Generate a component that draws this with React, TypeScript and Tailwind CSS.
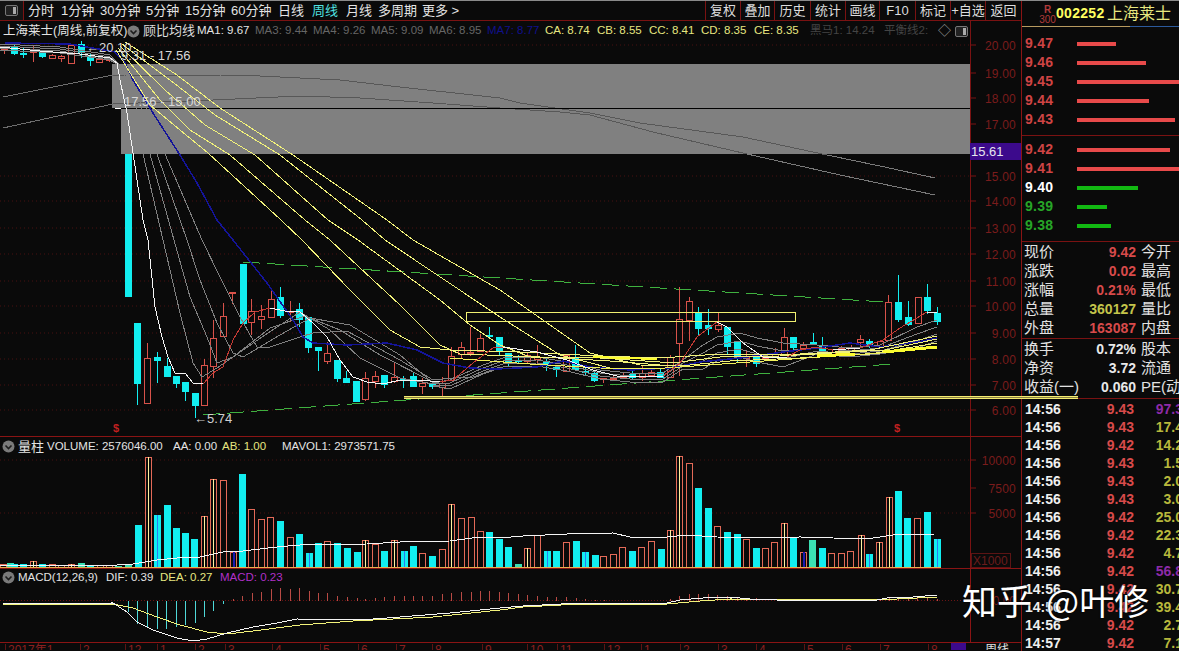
import React from "react";

type C = [number, number, number, number, number, "r" | "c"];
const candles: C[] = [
  [4,48,49,50,54,"r"],[14,45,47,53,55,"c"],[23,48,53,54,58,"c"],[33,45,51,52,62,"r"],[42,50,52,56,58,"c"],[52,54,55,58,58,"r"],[61,55,56,58,62,"r"],[71,44,45,63,64,"r"],[81,41,44,52,58,"c"],[90,54,55,60,66,"c"],[99,58,59,62,63,"r"],[109,56,58,60,62,"r"],
  [128,154,154,296,296,"c"],[137,323,323,383,405,"c"],[147,343,358,403,403,"r"],[157,352,357,360,383,"c"],[167,358,366,376,377,"c"],[176,376,376,383,388,"c"],[185,382,382,391,401,"c"],[195,393,393,405,418,"c"],[204,359,365,405,405,"r"],[213,320,338,366,378,"r"],[223,303,316,336,336,"r"],[232,292,292,293,304,"r"],[243,264,264,323,323,"c"],[251,299,311,322,335,"r"],[261,305,316,319,329,"r"],[271,288,299,317,317,"r"],[280,287,297,315,318,"c"],[290,301,311,312,322,"r"],[299,303,309,319,327,"c"],[308,317,317,347,353,"c"],[318,347,347,350,371,"c"],[327,342,353,361,364,"r"],[337,360,360,378,382,"c"],[346,371,378,382,382,"c"],[356,381,381,401,401,"c"],[365,372,378,399,401,"r"],[375,371,376,381,388,"r"],[384,375,375,384,388,"c"],[394,362,377,381,383,"r"],[403,376,379,380,388,"c"],[413,373,376,386,387,"c"],[422,378,383,386,394,"r"],[432,381,383,386,389,"c"],[442,377,383,387,396,"r"],[451,347,356,380,380,"r"],
  [461,342,347,354,358,"r"],[470,327,352,353,356,"r"],[480,334,338,351,352,"r"],[489,327,335,336,339,"c"],[499,337,337,351,355,"c"],[508,353,353,362,367,"c"],[518,355,360,361,364,"c"],[527,352,355,361,363,"r"],[537,345,357,359,365,"r"],[546,358,361,365,371,"c"],[556,365,367,369,377,"c"],[566,354,355,371,371,"r"],[575,345,357,369,371,"c"],[585,365,371,372,376,"c"],[594,372,373,380,382,"c"],[603,378,378,379,383,"r"],[613,376,378,379,381,"r"],[623,372,375,377,378,"r"],[632,371,374,377,379,"c"],[642,365,373,377,381,"r"],[651,368,372,375,377,"r"],[660,369,372,377,378,"c"],[670,355,357,377,377,"r"],[679,287,319,343,376,"r"],[689,297,301,320,341,"r"],[698,307,312,328,335,"c"],[708,309,325,328,335,"c"],[718,313,325,329,332,"r"],[727,327,327,346,355,"c"],[737,342,342,355,363,"c"],[746,350,356,358,367,"r"],[756,357,357,363,367,"c"],[765,354,356,358,360,"r"],[775,348,354,356,358,"r"],[784,328,337,355,356,"r"],[793,337,337,347,350,"c"],[803,342,345,348,350,"r"],[813,333,342,343,345,"c"],[822,337,346,352,354,"c"],[832,350,352,354,356,"r"],[841,346,348,350,352,"r"],[851,345,347,350,352,"r"],[860,335,339,342,347,"r"],[869,339,341,345,348,"c"],[880,340,341,346,347,"r"],[888,295,302,340,340,"r"],[898,275,302,319,322,"c"],[908,301,317,324,326,"c"],[918,297,297,323,323,"r"],[927,284,297,310,314,"c"],[937,307,313,321,325,"c"],
];

type V = [number, number, "c" | "b" | "h" | "y" | "n" | "g"];
const vols: V[] = [
  [3,564,"h"],[10,563,"g"],[14,564,"c"],[23,564,"c"],[33,561,"y"],[42,564,"c"],[52,564,"h"],[61,565,"h"],[71,564,"y"],[81,563,"g"],[90,565,"c"],[100,565,"h"],[109,565,"h"],[118,566,"g"],[128,565,"g"],
  [138,525,"c"],[148,457,"y"],[157,515,"b"],[167,505,"c"],[176,528,"c"],[185,533,"c"],[194,539,"c"],[204,516,"y"],[213,479,"y"],[223,480,"h"],[233,552,"n"],[242,474,"c"],[251,509,"h"],[261,519,"h"],[270,517,"h"],[280,521,"c"],[290,537,"h"],[299,534,"c"],[309,553,"b"],[318,543,"c"],[327,541,"h"],[337,543,"c"],[347,548,"c"],[357,552,"c"],[365,540,"y"],[375,544,"h"],[384,551,"c"],[394,540,"y"],[404,551,"b"],[413,546,"c"],[422,553,"h"],[432,556,"c"],[442,549,"h"],[451,504,"y"],[461,518,"h"],[471,517,"h"],[480,531,"h"],[489,532,"c"],[499,539,"c"],
  [508,547,"c"],[518,564,"g"],[527,548,"y"],[537,535,"h"],[547,551,"b"],[556,551,"c"],[566,542,"h"],[576,541,"c"],[585,552,"b"],[595,555,"c"],[603,556,"h"],[613,554,"h"],[622,547,"h"],[632,551,"c"],[641,547,"h"],[651,541,"h"],[661,549,"c"],[670,530,"y"],[679,456,"y"],[689,463,"h"],[698,488,"c"],[708,508,"c"],[717,526,"h"],[727,532,"c"],[737,534,"c"],[746,539,"h"],[756,548,"c"],[765,548,"h"],[774,542,"h"],[784,523,"y"],[793,538,"c"],[803,552,"n"],[812,540,"g"],[822,548,"c"],[831,553,"h"],[841,553,"h"],[850,551,"h"],[861,535,"y"],[869,554,"b"],[879,542,"y"],[889,497,"y"],[898,491,"c"],[907,518,"c"],[917,518,"h"],[927,512,"c"],[937,539,"b"],
];

const macdDown: [number, number][] = [[128,612],[137,624],[147,628],[157,629],[166,629],[176,627],[185,625],[195,623],[204,617],[213,611],[223,604]];
const macdUp: [number, number][] = [[233,599],[242,596],[252,593],[261,592],[271,589],[280,588],[290,589],[299,588],[309,591],[318,593],[327,593],[337,596],[347,597],[357,598],[365,599],[375,598],[384,597],[394,596],[404,596],[413,596],[422,596],[432,596],[442,594],[451,593],[461,592],[471,592],[480,591],[489,591],[499,592],[508,593],[518,594],[527,595],[537,596],[547,597],[556,597],[566,597],[576,598],[585,599],[595,600],[604,600],[670,599],[679,596],[689,594],[698,594],[708,594],[717,595],[727,596],[737,597],[746,598],[756,598],[880,599],[889,598],[898,598],[908,598],[917,598],[927,598],[937,599]];

const mainAxis: [string, number][] = [["20.00",45],["19.00",73],["18.00",98],["17.00",124],["15.00",176],["14.00",201],["13.00",228],["12.00",254],["11.00",281],["10.00",306],["9.00",333],["8.00",359],["7.00",385],["6.00",410]];

const timeLabels: [string, number][] = [["2017年1",5],["2",80],["12",125],["1",157],["2",195],["3",225],["4",272],["5",320],["6",358],["7",396],["8",432],["9",482],["10",527],["11",557],["12",604],["1",641],["2",680],["3",718],["4",756],["5",804],["6",842],["7",880],["8",928]];

const pts = (a: number[][]) => a.map((p) => p.join(",")).join(" ");

const mid: number[][] = [[450,380],[483,365],[503,358],[537,357],[567,362],[600,370],[630,373],[663,373],[683,360],[703,345],[717,337],[740,333],[757,338],[783,343],[817,345],[850,348],[880,345],[917,327],[937,320]];
const fan = (k: number) =>
  mid.map(([x, y]) => {
    const hump = x > 685 && x < 800 ? k * 5 : 0;
    const tail = x > 885 ? k * 4 : 0;
    return [x, y + k * 3 + hump + tail];
  });

const white: number[][][] = [
  [[0,47],[40,51],[80,54],[110,58],[117,63],[120,80],[127,113],[133,153],[143,220],[148,240],[155,307],[162,337],[168,357],[175,373],[185,373],[193,383],[203,384]],
  [[270,308],[285,311],[300,312],[313,323],[327,337],[340,360],[353,377],[367,382],[383,384],[400,380],[420,380],[440,382]],
  [[503,347],[537,352],[567,360],[593,370],[617,376],[663,376]],
  [[717,322],[727,327],[743,343],[763,357],[787,357]],
  [[833,350],[860,348]],
  [[927,312],[937,313]],
];
const red: number[][][] = [
  [[203,384],[213,373],[223,367],[233,340],[243,323],[255,312],[270,308]],
  [[440,382],[453,380],[473,363],[493,348],[503,347]],
  [[663,376],[680,363],[697,337],[717,322]],
  [[787,357],[800,350],[817,347],[833,350]],
  [[860,348],[883,340],[900,328],[927,312]],
];
const grayLines: number[][][] = [
  [[0,44],[60,47],[110,55],[120,65],[135,100],[143,154],[163,240],[180,313],[193,363],[202,377],[217,368],[233,357],[265,335],[300,312],[330,330],[360,358],[400,378],[433,384]],
  [[0,46],[60,49],[110,57],[122,66],[140,100],[150,154],[174,240],[190,297],[207,337],[217,363],[233,357],[270,328],[305,316],[340,330],[380,355],[433,382]],
  [[0,48],[60,51],[110,59],[124,68],[145,100],[157,154],[187,240],[200,280],[217,323],[233,353],[243,357],[280,335],[310,318],[350,325],[400,355],[433,383]],
  [[0,50],[60,53],[110,60],[126,70],[150,100],[165,154],[202,240],[220,277],[240,317],[257,347],[270,347],[300,337],[313,333],[347,331],[367,342],[400,360],[433,380],[453,378],[473,377],[500,367]],
  [[433,383],...fan(0)],[[433,384],...fan(1)],[[433,385],...fan(2)],[[433,386],...fan(3)],
];
const yellows: number[][][] = [
  [[125,42],[177,75],[220,108],[293,155],[387,220],[413,240],[500,290],[590,353],[640,365],[680,366],[730,361],[800,358],[870,354],[937,343]],
  [[122,44],[170,80],[215,115],[280,155],[362,220],[385,240],[500,317],[560,355],[610,368],[650,369]],
  [[120,46],[165,90],[205,125],[255,155],[328,220],[358,240],[440,300],[470,325],[500,345],[530,357],[600,358],[660,362],[680,362],[720,357],[780,356],[850,352],[885,350],[937,339]],
  [[118,48],[160,100],[190,130],[230,155],[305,220],[330,240],[400,305],[440,345],[460,354],[540,357],[610,361],[660,365]],
  [[116,50],[150,105],[180,130],[208,153],[281,220],[302,240],[350,290],[390,330],[420,347],[450,350],[520,352],[600,356],[660,358],[720,354],[800,354],[870,350],[937,336]],
];
const blue = [[5,43],[70,44],[115,52],[125,63],[133,80],[153,113],[180,155],[197,183],[217,220],[233,240],[267,283],[293,320],[303,337],[313,343],[347,345],[387,343],[417,350],[443,363],[470,368],[497,369],[537,367],[563,361],[590,367],[630,370],[670,368],[700,362],[740,358],[783,352],[817,348],[850,343],[880,347],[917,342],[937,338]];

const asks: [string, number][] = [["9.47",39],["9.46",69],["9.45",103],["9.44",72],["9.43",98]];
const bids: [string, number, string, string][] = [
  ["9.42",93,"text-[#cf4444]","bg-[#e84a4a]"],["9.41",103,"text-[#cf4444]","bg-[#e84a4a]"],["9.40",61,"text-white","bg-[#12b812]"],["9.39",30,"text-[#27a527]","bg-[#12b812]"],["9.38",34,"text-[#27a527]","bg-[#12b812]"],
];
const trades: [string, string, string, string][] = [
  ["14:56","9.43","97.3","text-[#8e2aa8]"],["14:56","9.43","17.4","text-[#b8b83c]"],["14:56","9.42","14.2","text-[#b8b83c]"],["14:56","9.43","1.5","text-[#b8b83c]"],["14:56","9.43","2.0","text-[#b8b83c]"],["14:56","9.43","3.0","text-[#b8b83c]"],["14:56","9.42","25.0","text-[#b8b83c]"],["14:56","9.42","22.3","text-[#b8b83c]"],["14:56","9.42","4.7","text-[#b8b83c]"],["14:56","9.42","56.8","text-[#8e2aa8]"],["14:56","9.42","30.7","text-[#b8b83c]"],["14:56","9.42","39.4","text-[#b8b83c]"],["14:56","9.42","2.7","text-[#b8b83c]"],["14:57","9.42","7.1","text-[#b8b83c]"],
];
const tabs: [string, string, string][] = [
  ["分时","w-[33px]","text-[#e4e4e4]"],["1分钟","w-[39px]","text-[#e4e4e4]"],["30分钟","w-[46px]","text-[#e4e4e4]"],["5分钟","w-[39px]","text-[#e4e4e4]"],["15分钟","w-[46px]","text-[#e4e4e4]"],["60分钟","w-[47px]","text-[#e4e4e4]"],["日线","w-[34px]","text-[#e4e4e4]"],["周线","w-[34px]","text-[#4fe0e0]"],["月线","w-[32px]","text-[#e4e4e4]"],["多周期","w-[44px]","text-[#e4e4e4]"],["更多 >","w-[50px]","text-[#e4e4e4]"],
];
const actions: [string, string][] = [["复权","w-[35px]"],["叠加","w-[34px]"],["历史","w-[36px]"],["统计","w-[35px]"],["画线","w-[34px]"],["F10","w-[36px]"],["标记","w-[35px]"],["+自选","w-[35px]"],["返回","w-[36px]"]];

const Chevron = () => (
  <svg width="13" height="13" viewBox="0 0 13 13" className="shrink-0">
    <circle cx="6.5" cy="6.5" r="6" fill="#7a7a7a" />
    <path d="M3.5 5.5 L6.5 8.5 L9.5 5.5" fill="none" stroke="#1c1c1c" strokeWidth="1.6" />
  </svg>
);
const WinIcon = () => (
  <svg width="13" height="11" viewBox="0 0 13 11" className="shrink-0">
    <rect x="0.5" y="0.5" width="12" height="10" rx="1.5" fill="#222" stroke="#777" />
    <rect x="8" y="2" width="3" height="7" fill="#aaa" />
  </svg>
);

const Row = ({ l, v, cls, r }: { l: string; v: string; cls: string; r: string }) => (
  <div className="flex items-center h-[19px] pl-[2px] whitespace-nowrap">
    <span className="w-[52px] shrink-0 text-[15px] text-[#e2e2e2]">{l}</span>
    <span className={`w-[60px] shrink-0 text-right text-[14px] font-bold ${cls}`}>{v}</span>
    <span className="ml-[5px] text-[15px] text-[#e2e2e2]">{r}</span>
  </div>
);

export default function App() {
  return (
    <div className="relative w-[1179px] h-[651px] overflow-hidden bg-[#0a0a0a] font-['Liberation_Sans','Noto_Sans_CJK_SC',sans-serif] text-[12px] text-[#ddd]">
      <div className="h-px bg-[#8a8a8a]" />
      <div className="flex h-[650px]">
        <div className="w-[1021px] shrink-0 flex flex-col">
          {/* toolbar */}
          <div className="flex items-center h-[20px] shrink-0 border-b border-[#7a1212] text-[13px]">
            <div className="w-[24px] h-full flex items-center justify-center border-r border-[#7a1212] mr-[4px] bg-[#141414]">
              <WinIcon />
            </div>
            {tabs.map(([t, w, c], i) => (
              <span key={i} className={`${w} ${c} whitespace-nowrap`}>{t}</span>
            ))}
            <div className="ml-auto flex h-full">
              {actions.map(([t, w]) => (
                <span key={t} className={`${w} flex items-center justify-center border-l border-[#7a1212] whitespace-nowrap`}>{t}</span>
              ))}
            </div>
          </div>
          {/* legend */}
          <div className="flex items-center w-[971px] h-[20px] shrink-0 border-r border-[#7a1212] pl-[3px] whitespace-nowrap text-[11.5px]">
            <span className="w-[124px] text-[12.5px] text-[#e4e4e4]">上海莱士(周线,前复权)</span>
            <Chevron />
            <span className="ml-[3px] w-[54px] text-[13px]">顾比均线</span>
            <span className="w-[58px] text-[#e4e4e4]">MA1: 9.67</span>
            <span className="w-[58px] text-[#666]">MA3: 9.44</span>
            <span className="w-[58px] text-[#666]">MA4: 9.26</span>
            <span className="w-[58px] text-[#666]">MA5: 9.09</span>
            <span className="w-[58px] text-[#666]">MA6: 8.95</span>
            <span className="w-[58px] text-[#10108a]">MA7: 8.77</span>
            <span className="w-[52px] text-[#e6e680]">CA: 8.74</span>
            <span className="w-[52px] text-[#e6e680]">CB: 8.55</span>
            <span className="w-[52px] text-[#e6e680]">CC: 8.41</span>
            <span className="w-[53px] text-[#e6e680]">CD: 8.35</span>
            <span className="w-[56px] text-[#e6e680]">CE: 8.35</span>
            <span className="w-[74px] text-[#444]">黑马1: 14.24</span>
            <span className="w-[54px] text-[#444] overflow-hidden">平衡线2: </span>
            <span className="w-[17px] text-[#999] text-[13px]">◇</span>
            <WinIcon />
          </div>
          {/* main chart */}
          <svg width="1021" height="395" viewBox="0 41 1021 395" className="block shrink-0" fontSize="12">
            <rect x="112" y="64" width="858" height="44" fill="#808080" />
            <rect x="121" y="108" width="849" height="46" fill="#808080" />
            {mainAxis.map(([t, y]) => (
              <g key={t}>
                <line x1="0" x2="970" y1={y} y2={y} stroke="#481010" strokeDasharray="1 3" opacity={y > 64 && y < 154 ? 0 : 1} />
                <line x1="970" x2="976" y1={y} y2={y} stroke="#7a1212" />
                <text x="1016" y={y + 5} textAnchor="end" fill="#7a1c1c" letterSpacing="0.2">{t}</text>
              </g>
            ))}
            <line x1="970.5" x2="970.5" y1="41" y2="437" stroke="#7a1212" />
            <rect x="970" y="143" width="51" height="17" fill="#3c0a8c" />
            <text x="971" y="156" fill="#e6e6f0" fontSize="13">15.61</text>

            <g shapeRendering="crispEdges">
              <polyline points="3,97 113,75" fill="none" stroke="#6e6e6e" />
              <polyline points="3,128 113,104" fill="none" stroke="#6e6e6e" />
              <polyline points={pts([[113,75],[220,75],[260,76],[340,80],[400,87],[500,98],[520,103],[590,113],[640,123],[743,137],[827,155]])} fill="none" stroke="#585858" />
              <polyline points={pts([[827,155],[880,166],[935,178]])} fill="none" stroke="#7a7a7a" />
              <polyline points={pts([[113,104],[213,100],[300,96],[360,98],[433,103],[500,108],[560,112],[590,115],[653,132],[747,154]])} fill="none" stroke="#585858" />
              <polyline points={pts([[747,154],[840,175],[935,195]])} fill="none" stroke="#7a7a7a" />
              <line x1="121" x2="970" y1="108.5" y2="108.5" stroke="#000" />
              <line x1="115" x2="121" y1="108.5" y2="108.5" stroke="#fff" />

              <line x1="243" y1="262" x2="885" y2="302" stroke="#3fb03f" strokeDasharray="17 7" />
              <line x1="203" y1="415" x2="893" y2="364" stroke="#3fb03f" strokeDasharray="17 7" />

              {candles.map(([x, hi, t, b, lo, k], i) => {
                const col = k === "r" ? "#d8524a" : "#12eef0";
                return (
                  <g key={i}>
                    <line x1={x + 0.5} x2={x + 0.5} y1={hi} y2={lo} stroke={col} />
                    <rect x={x - 2.5} y={t + 0.5} width={6} height={Math.max(b - t, 1)} fill={k === "r" ? "#0a0a0a" : col} stroke={col} />
                  </g>
                );
              })}

              {grayLines.map((l, i) => (
                <polyline key={i} points={pts(l)} fill="none" stroke="#808080" />
              ))}
              <polyline points={pts(blue)} fill="none" stroke="#14149a" strokeWidth="1.5" />
              {yellows.map((l, i) => (
                <polyline key={i} points={pts(l)} fill="none" stroke="#f2f27a" />
              ))}
              <polyline points={pts([[450,358],[530,364],[600,368],[650,369],[680,367],[750,362],[820,357],[880,353],[937,348]])} fill="none" stroke="#f2f25a" />
              <polyline points={pts([[593,357],[657,359]])} fill="none" stroke="#fcfc30" strokeWidth="2" />
              <polyline points={pts([[817,356],[855,354]])} fill="none" stroke="#fcfc30" strokeWidth="3" />
              <polyline points={pts([[883,352],[937,347]])} fill="none" stroke="#fcfc30" strokeWidth="3" />
              {white.map((l, i) => (
                <polyline key={i} points={pts(l)} fill="none" stroke="#f4f4f4" />
              ))}
              {red.map((l, i) => (
                <polyline key={i} points={pts(l)} fill="none" stroke="#c43a34" />
              ))}
              <rect x="466.5" y="312.5" width="329" height="9" fill="none" stroke="#f0f070" />
            </g>

            <text x="86" y="52" fill="#d8d8d8" fontSize="13">←20.10</text>
            <text x="121" y="60" fill="#d8d8d8" fontSize="13">9.31 - 17.56</text>
            <text x="124" y="106" fill="#d8d8d8" fontSize="13">17.56 - 15.00</text>
            <text x="194" y="423" fill="#d0d0d0" fontSize="13">←5.74</text>
            <text x="116" y="432" fill="#c02020" fontSize="11" fontWeight="bold" textAnchor="middle">$</text>
            <text x="897" y="432" fill="#c02020" fontSize="11" fontWeight="bold" textAnchor="middle">$</text>
          </svg>
          {/* volume panel */}
          <div className="relative h-[132px] shrink-0 border-t border-[#8a1414]">
            <div className="absolute left-[2px] top-0 flex items-center whitespace-nowrap text-[#e4e4e4] text-[11.5px]">
              <Chevron />
              <span className="ml-[3px] w-[29px] text-[13px]">量柱</span>
              <span className="w-[126px]">VOLUME: 2576046.00</span>
              <span className="w-[49px]">AA: 0.00</span>
              <span className="w-[60px] text-[#e6e680]">AB: 1.00</span>
              <span>MAVOL1: 2973571.75</span>
            </div>
            <svg width="1021" height="131" viewBox="0 437 1021 131" className="block" fontSize="12">
              {[460, 513].map((y) => (
                <line key={y} x1="0" x2="970" y1={y} y2={y} stroke="#481010" strokeDasharray="1 3" />
              ))}
              <line x1="970.5" x2="970.5" y1="437" y2="568" stroke="#7a1212" />
              {[["10000",460],["7500",488],["5000",513]].map(([t, y]) => (
                <g key={t as string}>
                  <line x1="970" x2="976" y1={y as number} y2={y as number} stroke="#7a1212" />
                  <text x="1016" y={(y as number) + 5} textAnchor="end" fill="#7a1c1c" letterSpacing="0.2">{t}</text>
                </g>
              ))}
              <rect x="971.5" y="553.5" width="39" height="14" fill="none" stroke="#5c1414" />
              <text x="973" y="565" fill="#6a1c1c">X1000</text>
              <g shapeRendering="crispEdges">
                {vols.map(([x, top, k], i) => {
                  const h = 567 - top;
                  if (k === "c" || k === "b" || k === "g")
                    return (
                      <g key={i}>
                        <rect x={x - 3} y={top} width="7" height={h} fill={k === "g" ? "#3be0b4" : "#12eef0"} />
                        {k === "b" && <line x1={x + 0.5} x2={x + 0.5} y1={top} y2="567" stroke="#2a7cf0" />}
                      </g>
                    );
                  return (
                    <g key={i}>
                      <rect x={x - 2.5} y={top + 0.5} width="6" height={h} fill="#0a0a0a" stroke="#e46a58" />
                      {k === "y" && <line x1={x + 0.5} x2={x + 0.5} y1={top} y2="567" stroke="#fff2a0" />}
                      {k === "n" && <line x1={x + 0.5} x2={x + 0.5} y1={top} y2="567" stroke="#1a1ab0" strokeWidth="2" />}
                    </g>
                  );
                })}
                <line x1="0" x2="941" y1="567" y2="567" stroke="#e6b050" />
                <polyline fill="none" stroke="#f4f4f4" points="0,565 117,565 133,564 157,560 177,558 200,557 223,552 243,551 277,547 300,545 367,544 400,542 450,541 480,537 500,538 523,536 567,534 613,533 630,537 667,537 687,535 717,537 767,538 800,537 833,538 867,539 893,535 935,534" />
              </g>
            </svg>
          </div>
          {/* macd panel */}
          <div className="relative h-[74px] shrink-0 border-t border-[#8a1414]">
            <div className="absolute left-[2px] top-0 flex items-center whitespace-nowrap text-[#e4e4e4] text-[11.5px]">
              <Chevron />
              <span className="ml-[3px] w-[88px]">MACD(12,26,9)</span>
              <span className="w-[54px]">DIF: 0.39</span>
              <span className="w-[60px] text-[#e6e680]">DEA: 0.27</span>
              <span className="text-[#b030c8]">MACD: 0.23</span>
            </div>
            <svg width="1021" height="73" viewBox="0 569 1021 73" className="block" fontSize="12">
              <line x1="0" x2="970" y1="600.5" y2="600.5" stroke="#6a1414" strokeDasharray="1 2" />
              <line x1="970.5" x2="970.5" y1="569" y2="642" stroke="#8a1414" />
              <text x="1016" y="605" textAnchor="end" fill="#7a1c1c">0.00</text>
              <g shapeRendering="crispEdges">
                {macdDown.map(([x, y]) => (
                  <line key={x} x1={x + 0.5} x2={x + 0.5} y1="601" y2={y} stroke="#4fd8d8" />
                ))}
                {macdUp.map(([x, y]) => (
                  <line key={x} x1={x + 0.5} x2={x + 0.5} y1="601" y2={y} stroke="#b84a44" />
                ))}
                <polyline fill="none" stroke="#f2f27a" points="3,604 113,604 133,608 157,617 180,625 207,632 227,634 253,631 300,625 353,621 433,617 500,610 523,607 580,604 667,604 700,601 730,599 877,600 937,597" />
                <polyline fill="none" stroke="#f4f4f4" points="3,604 113,603 127,612 137,622 153,630 177,638 193,641 207,639 227,633 253,627 277,623 297,619 360,620 400,617 450,613 500,608 523,606 580,603 667,603 680,600 703,598 730,597 750,599 777,600 877,600 887,598 913,597 937,595" />
              </g>
            </svg>
          </div>
          {/* time axis */}
          <div className="relative h-[8px] shrink-0 border-t border-[#8a1414] overflow-hidden">
            {timeLabels.map(([t, x], i) => (
              <span key={i} style={{ left: x }} className="absolute top-px text-[#8a2020] leading-[13px] border-l border-[#5c1414] pl-[2px] whitespace-nowrap">{t}</span>
            ))}
            <span className="absolute left-[951px] top-0 w-[15px] h-[8px] bg-[#3c0a8c]" />
            <span className="absolute left-[985px] top-[1px] leading-[13px] text-[#e6e6e6]">周线</span>
          </div>
        </div>
        {/* right panel */}
        <div className="w-[158px] shrink-0 border-l border-[#8a1414] flex flex-col overflow-hidden">
          <div className="flex items-center h-[25px] shrink-0 pl-[17px] whitespace-nowrap">
            <div className="w-[17px] flex flex-col items-center text-[#b03a3a] text-[10px] leading-[10px] pt-[3px]">
              <span className="font-bold">R</span>
              <span>300</span>
            </div>
            <span className="text-[14px] font-bold text-[#ffff60] tracking-[0.3px] w-[51px]">002252</span>
            <span className="text-[16px] text-[#e8e880]">上海莱士</span>
          </div>
          <div className="flex h-px shrink-0">
            <div className="w-[108px] bg-[#b89a60]" />
            <div className="flex-1 bg-[#2c5a9c]" />
          </div>
          <div className="h-[109px] shrink-0 pt-[7px] border-b border-[#7a1212]">
            {asks.map(([p, w]) => (
              <div key={p} className="flex items-center h-[19px] pl-[3px]">
                <span className="w-[52px] shrink-0 text-[14px] font-bold text-[#cf4444] tracking-[0.3px]">{p}</span>
                <div style={{ width: w }} className="h-[4px] shrink-0 bg-[#e84a4a]" />
              </div>
            ))}
          </div>
          <div className="h-[106px] shrink-0 pt-[4px] border-b border-[#7a1212]">
            {bids.map(([p, w, t, b]) => (
              <div key={p} className="flex items-center h-[19px] pl-[3px]">
                <span className={`w-[52px] shrink-0 text-[14px] font-bold tracking-[0.3px] ${t}`}>{p}</span>
                <div style={{ width: w }} className={`h-[4px] shrink-0 ${b}`} />
              </div>
            ))}
          </div>
          <div className="h-[97px] shrink-0 pt-px border-b border-[#7a1212]">
            <Row l="现价" v="9.42" cls="text-[#d84a4a]" r="今开" />
            <Row l="涨跌" v="0.02" cls="text-[#d84a4a]" r="最高" />
            <Row l="涨幅" v="0.21%" cls="text-[#d84a4a]" r="最低" />
            <Row l="总量" v="360127" cls="text-[#c4c44a]" r="量比" />
            <Row l="外盘" v="163087" cls="text-[#d84a4a]" r="内盘" />
          </div>
          <div className="h-[60px] shrink-0 pt-px border-b border-[#7a1212]">
            <Row l="换手" v="0.72%" cls="text-[#e8e8e8]" r="股本" />
            <Row l="净资" v="3.72" cls="text-[#e8e8e8]" r="流通" />
            <Row l="收益(一)" v="0.060" cls="text-[#e8e8e8]" r="PE(动" />
          </div>
          <div className="pt-px">
            {trades.map(([t, p, v, c], i) => (
              <div key={i} className="flex items-center h-[18px] pl-[3px] text-[14px] font-bold whitespace-nowrap">
                <span className="w-[50px] shrink-0 text-[#efefef]">{t}</span>
                <span className="w-[59px] shrink-0 text-right text-[#d84a4a]">{p}</span>
                <span className={`w-[49px] shrink-0 text-right ${c}`}>{v}</span>
              </div>
            ))}
          </div>
        </div>
      </div>
      {/* long yellow line over chart and list */}
      <div className="absolute left-[404px] top-[396px] w-[674px] h-[3px] bg-[#8a8040] border-y border-y-[#f4ec70]" />
      {/* watermark */}
      <div className="absolute left-[962px] top-[576px] flex text-[35px] leading-[48px] text-white whitespace-nowrap font-['Noto_Sans_CJK_SC',sans-serif] [text-shadow:0_0_2px_#000]">
        <span className="mr-[14px]">知乎</span>
        <span>@叶修</span>
      </div>
    </div>
  );
}
